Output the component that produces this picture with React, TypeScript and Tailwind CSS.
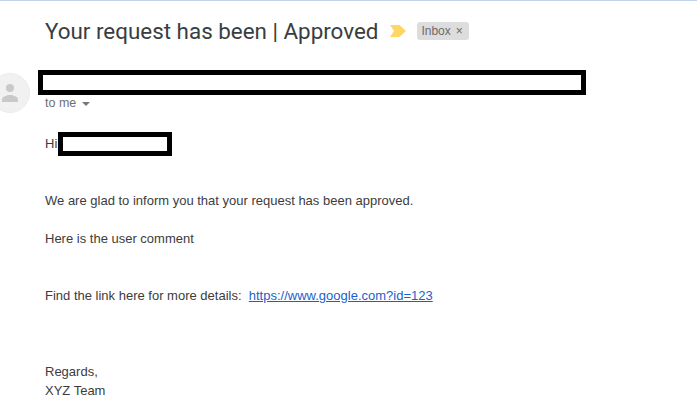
const bodyFont = "font-['Liberation_Sans',Arial,sans-serif]";

function Avatar() {
  return (
    <div className="w-10 h-10 shrink-0 rounded-full bg-[#f1f1f1] border border-[#ececec] flex items-center justify-center">
      <svg width="16" height="20" viewBox="0 0 16 20">
        <circle cx="8" cy="5" r="4" fill="#c9c9c9" />
        <path d="M0 19v-2.5C0 13.5 5 12 8 12s8 1.5 8 4.5V19z" fill="#c9c9c9" />
      </svg>
    </div>
  );
}

export default function App() {
  return (
    <div className={`w-[697px] h-[420px] overflow-hidden bg-white border-t border-[#c5d3e8] text-[#3c3c3c] ${bodyFont}`}>
      <div className="flex items-center h-[18px] mt-[21px] ml-[45px]">
        <h1 className="font-['Roboto',sans-serif] text-[22.4px] leading-[18px] text-[#3a3d40] whitespace-nowrap">
          Your request has been | Approved
        </h1>
        <svg className="ml-[12px]" width="16" height="12" viewBox="0 0 16 12">
          <path d="M0 0h9.5L16 6l-6.5 6H0l4-6z" fill="#fdd663" />
        </svg>
        <span className="ml-[11px] h-[18px] w-[52px] rounded-[3px] bg-[#dddddd] text-[#6b6b6b] text-[12px] flex items-center pl-[4px] gap-[5px]">
          Inbox
          <span className="text-[12px] leading-none">×</span>
        </span>
      </div>

      <div className="flex mt-[30px] -ml-[10px]">
        <div className="mt-[3px]">
          <Avatar />
        </div>
        <div className="ml-[8px]">
          <div className="w-[548px] h-[25px] border-[5px] border-black bg-white" />
          <div className="flex items-center ml-[7px] mt-px h-[15px] text-[12.5px] text-[#6f6f6f]">
            to me
            <span className="ml-[6px] w-0 h-0 border-x-[4px] border-x-transparent border-t-[4px] border-t-[#777777]" />
          </div>
        </div>
      </div>

      <div className="ml-[45px] text-[13px] leading-[19px]">
        <div className="flex items-center mt-[19px] h-[24px]">
          <span className="mb-[2px]">Hi</span>
          <div className="ml-[1px] w-[114px] h-[24px] border-[5px] border-black bg-white" />
        </div>
        <p className="mt-[35px]">We are glad to inform you that your request has been approved.</p>
        <p className="mt-[19px]">Here is the user comment</p>
        <p className="mt-[38px] whitespace-pre">
          {'Find the link here for more details:  '}
          <a href="#" className="text-[#1a5fd0] underline">https://www.google.com?id=123</a>
        </p>
        <p className="mt-[57px]">Regards,</p>
        <p>XYZ Team</p>
      </div>
    </div>
  );
}
